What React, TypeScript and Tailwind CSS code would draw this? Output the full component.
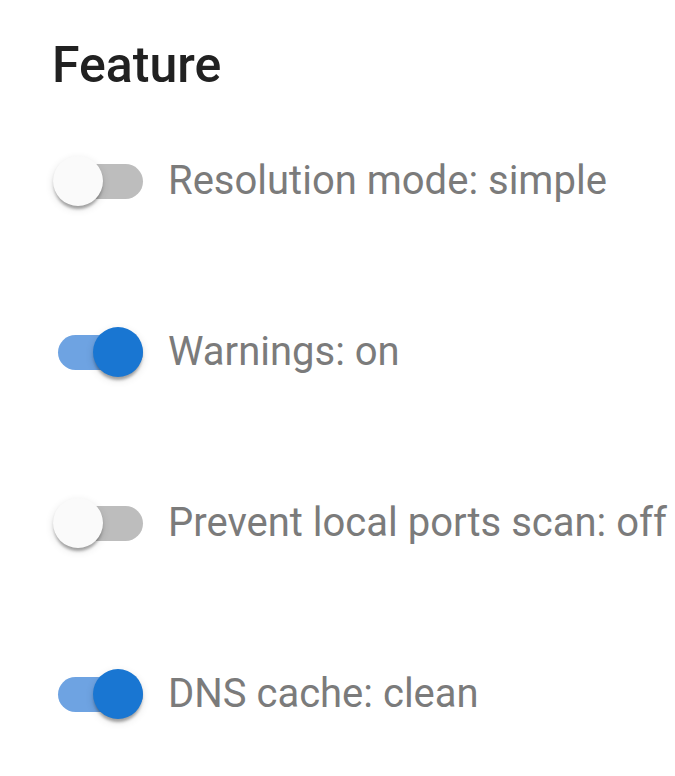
import React from 'react';

const features = [
  { label: 'Resolution mode: simple', on: false },
  { label: 'Warnings: on', on: true },
  { label: 'Prevent local ports scan: off', on: false },
  { label: 'DNS cache: clean', on: true },
];

const Toggle: React.FC<{ on: boolean }> = ({ on }) => (
  <div className="relative w-[90px] h-[50px] flex items-center shrink-0">
    <div
      className={`ml-[5px] w-[85px] h-[35px] rounded-full ${on ? 'bg-[#6ea3e2]' : 'bg-[#bdbdbd]'}`}
    />
    <div
      className={`absolute top-0 w-[50px] h-[50px] rounded-full shadow-[0_5px_3px_-2px_rgba(0,0,0,0.2),0_3px_3px_0_rgba(0,0,0,0.14),0_3px_8px_0_rgba(0,0,0,0.12)] ${
        on ? 'left-[40px] bg-[#1976d2]' : 'left-0 bg-[#fafafa]'
      }`}
    />
  </div>
);

export default function App() {
  return (
    <div className="min-h-screen bg-white pl-[53px] pt-[35px] font-['Roboto',sans-serif]">
      <h2 className="text-[50px] leading-[60px] font-medium text-[#212121] -ml-px">Feature</h2>
      <div className="mt-[61px] flex flex-col gap-[121px]">
        {features.map((f) => (
          <div key={f.label} className="flex items-center h-[50px]">
            <Toggle on={f.on} />
            <span className="ml-[25px] text-[40px] leading-[50px] text-[#7b7b7b] whitespace-nowrap">
              {f.label}
            </span>
          </div>
        ))}
      </div>
    </div>
  );
}
